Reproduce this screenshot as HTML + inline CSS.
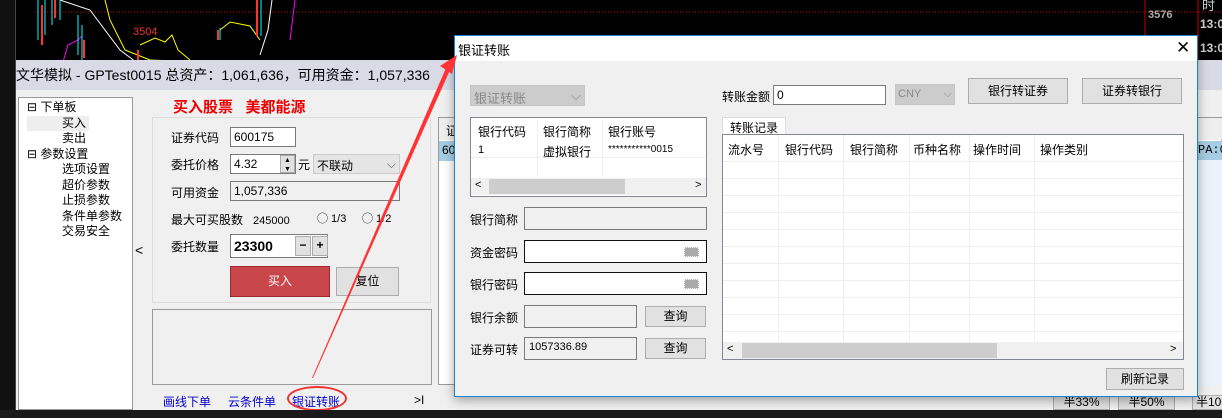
<!DOCTYPE html>
<html><head><meta charset="utf-8"><style>
*{margin:0;padding:0;box-sizing:border-box}
body{width:1222px;height:418px;overflow:hidden;background:#000;position:relative;font-family:"Liberation Sans","Noto Sans CJK SC",sans-serif;font-size:12px;color:#000}
.a{position:absolute;white-space:nowrap}
.inp{position:absolute;background:#fff;border:1px solid #7a7a7a}
.btn{position:absolute;background:#e1e1e1;border:1px solid #adadad;text-align:center}
.gl{position:absolute;background:#f0f0f0}
</style></head><body>
<svg class="a" style="left:0;top:0" width="1222" height="70">
<line x1="35" y1="12" x2="1222" y2="12" stroke="#c00" stroke-dasharray="1,2"/>
<line x1="1145" y1="0" x2="1145" y2="36" stroke="#c00"/>
<line x1="1198" y1="0" x2="1198" y2="60" stroke="#c00"/>
<polyline points="60,0 90,10 120,50 140,65" fill="none" stroke="#fff" stroke-width="1"/>
<polyline points="105,0 110,20 125,50 150,60 200,62" fill="none" stroke="#ff0" stroke-width="1"/>
<polyline points="63,62 68,45 78,40 82,36" fill="none" stroke="#f0f" stroke-width="1"/>
<polyline points="140,45 155,38 165,42 172,35 178,50 190,60" fill="none" stroke="#ff0"/>
<polyline points="220,30 230,22 250,26 260,40" fill="none" stroke="#ff0"/>
<polyline points="272,0 268,30 260,55" fill="none" stroke="#fff"/>
<polyline points="295,0 290,40" fill="none" stroke="#f0f"/>
<g stroke="#0ff"><line x1="38" y1="0" x2="38" y2="40"/><line x1="45" y1="0" x2="45" y2="35"/><line x1="52" y1="0" x2="52" y2="25"/><line x1="60" y1="0" x2="60" y2="20"/><line x1="78" y1="15" x2="78" y2="55"/><line x1="82" y1="25" x2="82" y2="60"/><line x1="220" y1="28" x2="220" y2="40"/><line x1="261" y1="0" x2="261" y2="36"/></g>
<g stroke="#f33" stroke-width="2"><line x1="42" y1="5" x2="42" y2="45"/><line x1="55" y1="0" x2="55" y2="18"/><line x1="84" y1="40" x2="84" y2="58"/><line x1="138" y1="50" x2="138" y2="62"/><line x1="257" y1="0" x2="257" y2="36"/><line x1="218" y1="30" x2="218" y2="40"/></g>
<text x="133" y="35" fill="#e33" font-size="11" font-family="Liberation Sans">3504</text>
<text x="1148" y="18" fill="#aaa" font-size="11" font-weight="bold" font-family="Liberation Sans">3576</text>
<text x="1202" y="10" fill="#ccc" font-size="13" font-family="Noto Sans CJK SC">时</text>
<text x="1200" y="28" fill="#ccc" font-size="12" font-weight="bold" font-family="Liberation Sans">13:0</text>
<text x="1200" y="52" fill="#ccc" font-size="12" font-weight="bold" font-family="Liberation Sans">13:0</text>
</svg>
<div class="a" style="left:0;top:0;width:16px;height:418px;background:#111;border-right:1px solid #444"></div>
<!-- main window -->
<div class="a" style="left:16px;top:60px;width:1206px;height:350px;background:#f0f0f0"></div>
<div class="a" style="left:16px;top:60px;width:1206px;height:30px;background:#d8dae6"></div>
<div class="a" style="left:16px;top:64px;font-size:14px;line-height:22px">文华模拟 - GPTest0015 总资产：1,061,636，可用资金：1,057,336</div>
<div class="a" style="left:18px;top:97px;width:115px;height:313px;background:#fff;border:1px solid #999"></div>
<div class="a" style="left:27px;top:100px;line-height:15.5px;font-size:12px">
<div>⊟ 下单板</div><div style="padding-left:35px;background:#eee;width:62px">买入</div><div style="padding-left:35px">卖出</div><div>⊟ 参数设置</div><div style="padding-left:35px">选项设置</div><div style="padding-left:35px">超价参数</div><div style="padding-left:35px">止损参数</div><div style="padding-left:35px">条件单参数</div><div style="padding-left:35px">交易安全</div></div>
<div class="a" style="left:135px;top:242px;font-size:14px">&lt;</div>
<div class="a" style="left:173px;top:96px;color:#e00;font-weight:bold;font-size:15px">买入股票 &nbsp; 美都能源</div>
<div class="a" style="left:152px;top:117px;width:279px;height:186px;border:1px solid #ddd"></div>
<div class="a" style="left:171px;top:129px">证券代码</div><div class="inp" style="left:230px;top:127px;width:66px;height:20px;padding:2px 3px">600175</div>
<div class="a" style="left:171px;top:156px">委托价格</div><div class="inp" style="left:230px;top:154px;width:66px;height:20px;padding:2px 3px">4.32</div>
<div class="btn" style="left:280px;top:155px;width:15px;height:18px;font-size:7px;line-height:9px">▲<br>▼</div>
<div class="a" style="left:298px;top:156px">元</div>
<div class="a" style="left:313px;top:154px;width:87px;height:20px;background:#e5e5e5;border:1px solid #ccc;padding:2px 3px">不联动<span style="float:right;color:#555">⌵</span></div>
<div class="a" style="left:171px;top:184px">可用资金</div><div class="a" style="left:230px;top:181px;width:170px;height:20px;background:#f0f0f0;border:1px solid #7a7a7a;padding:2px 3px">1,057,336</div>
<div class="a" style="left:171px;top:211px">最大可买股数 &nbsp;&nbsp;<span style="font-size:11px">245000</span></div>
<div class="a" style="left:317px;top:210px;font-size:11px">◯ 1/3</div><div class="a" style="left:362px;top:210px;font-size:11px">◯ 1/2</div>
<div class="a" style="left:171px;top:238px">委托数量</div>
<div class="inp" style="left:230px;top:234px;width:98px;height:24px;padding:3px 3px;font-weight:bold;font-size:14px">23300</div>
<div class="btn" style="left:295px;top:236px;width:16px;height:20px;font-weight:bold;line-height:17px">−</div>
<div class="btn" style="left:312px;top:236px;width:16px;height:20px;font-weight:bold;line-height:17px">+</div>
<div class="a" style="left:230px;top:266px;width:100px;height:31px;background:#c9464a;border:1px solid #9a2a2e;color:#fff;text-align:center;line-height:29px">买入</div>
<div class="btn" style="left:336px;top:267px;width:63px;height:29px;line-height:27px">复位</div>
<div class="a" style="left:152px;top:309px;width:280px;height:76px;border:1px solid #999"></div>
<div class="a" style="left:163px;top:393px;color:#00c">画线下单</div>
<div class="a" style="left:228px;top:393px;color:#00c">云条件单</div>
<div class="a" style="left:292px;top:393px;color:#00c">银证转账</div>
<div class="a" style="left:414px;top:393px">&gt;I</div>
<div class="a" style="left:287px;top:386px;width:60px;height:25px;border:2px solid #e33;border-radius:50%"></div>
<!-- right behind table -->
<div class="a" style="left:438px;top:117px;width:784px;height:268px;background:#fff;border:1px solid #999"></div>
<div class="a" style="left:439px;top:118px;width:783px;height:22px;background:#eee"></div>
<div class="a" style="left:439px;top:141px;width:783px;height:20px;background:#a6cde3"></div>
<div class="a" style="left:446px;top:122px">证</div><div class="a" style="left:442px;top:143px">60</div>
<div class="a" style="left:1198px;top:143px;font-family:'Liberation Mono'">PA:0</div>
<div class="a" style="left:1198px;top:160px;width:24px;height:225px;background:#eaf2fb"></div>
<div class="a" style="left:1196px;top:60px;width:26px;height:30px;background:#d8dae6"></div>
<div class="btn" style="left:1053px;top:395px;width:57px;height:15px;line-height:13px">半33%</div>
<div class="btn" style="left:1118px;top:395px;width:57px;height:15px;line-height:13px">半50%</div>
<div class="btn" style="left:1192px;top:395px;width:40px;height:15px;line-height:13px">半100</div>
<div class="a" style="left:0;top:410px;width:1222px;height:8px;background:#1a1a1a"></div>
<!-- dialog -->
<div class="a" style="left:454px;top:35px;width:744px;height:362px;background:#f0f0f0;border:1px solid #1883d7;box-shadow:0 3px 10px rgba(0,0,0,.35)"></div>
<div class="a" style="left:455px;top:36px;width:742px;height:25px;background:#fff"></div>
<div class="a" style="left:458px;top:40px;font-size:13px">银证转账</div>
<div class="a" style="left:1176px;top:38px;font-size:17px">✕</div>
<div class="a" style="left:470px;top:85px;width:115px;height:21px;background:#ccc;border:1px solid #c4c4c4;color:#888;padding:2px 3px;font-size:13px">银证转账<span style="float:right">⌵</span></div>
<div class="a" style="left:470px;top:117px;width:237px;height:80px;background:#fff;border:1px solid #828790"></div>
<div class="a" style="left:537px;top:120px;width:1px;height:56px;background:#eee"></div><div class="a" style="left:602px;top:120px;width:1px;height:56px;background:#eee"></div>
<div class="a" style="left:471px;top:157px;width:235px;height:1px;background:#eee"></div>
<div class="a" style="left:478px;top:123px">银行代码</div><div class="a" style="left:543px;top:123px">银行简称</div><div class="a" style="left:608px;top:123px">银行账号</div>
<div class="a" style="left:478px;top:144px;font-size:11px">1</div><div class="a" style="left:543px;top:143px">虚拟银行</div><div class="a" style="left:608px;top:144px;font-size:10px">***********0015</div>
<div class="a" style="left:471px;top:178px;width:235px;height:17px;background:#f0f0f0"></div>
<div class="a" style="left:489px;top:179px;width:136px;height:15px;background:#cdcdcd"></div>
<div class="a" style="left:475px;top:179px;font-size:11px">&lt;</div><div class="a" style="left:695px;top:179px;font-size:11px">&gt;</div>
<div class="a" style="left:470px;top:211px">银行简称</div><div class="a" style="left:524px;top:207px;width:183px;height:23px;border:1px solid #7a7a7a"></div>
<div class="a" style="left:470px;top:244px">资金密码</div><div class="a" style="left:524px;top:240px;width:183px;height:23px;background:#fff;border:1px solid #111"></div>
<div class="a" style="left:470px;top:276px">银行密码</div><div class="a" style="left:524px;top:272px;width:183px;height:23px;background:#fff;border:1px solid #111"></div>
<div class="a" style="left:684px;top:247px;width:15px;height:10px;background:#aaa;border:1px dotted #fff"></div>
<div class="a" style="left:684px;top:279px;width:15px;height:10px;background:#aaa;border:1px dotted #fff"></div>
<div class="a" style="left:470px;top:309px">银行余额</div><div class="a" style="left:524px;top:305px;width:113px;height:23px;border:1px solid #7a7a7a"></div>
<div class="btn" style="left:645px;top:306px;width:61px;height:21px;line-height:19px">查询</div>
<div class="a" style="left:470px;top:341px">证券可转</div><div class="a" style="left:524px;top:337px;width:113px;height:23px;border:1px solid #7a7a7a;padding:3px 4px;font-size:11px">1057336.89</div>
<div class="btn" style="left:645px;top:338px;width:61px;height:21px;line-height:19px">查询</div>
<div class="a" style="left:722px;top:88px">转账金额</div>
<div class="inp" style="left:773px;top:85px;width:113px;height:20px;padding:2px 3px">0</div>
<div class="a" style="left:895px;top:84px;width:60px;height:21px;background:#ccc;border:1px solid #c4c4c4;color:#888;padding:3px 2px;font-size:11px">CNY<span style="float:right">⌵</span></div>
<div class="btn" style="left:968px;top:78px;width:100px;height:26px;line-height:24px">银行转证券</div>
<div class="btn" style="left:1082px;top:78px;width:100px;height:26px;line-height:24px">证券转银行</div>
<div class="a" style="left:722px;top:117px;width:64px;height:18px;background:#fff;border:1px solid #ddd;border-bottom:none;padding:1px 7px">转账记录</div>
<div class="a" style="left:722px;top:134px;width:462px;height:226px;background:#fff;border:1px solid #828790"></div>
<svg class="a" style="left:723px;top:135px" width="460" height="207">
<g stroke="#eee"><line x1="55.5" y1="0" x2="55.5" y2="207"/><line x1="120.5" y1="0" x2="120.5" y2="207"/><line x1="186.5" y1="0" x2="186.5" y2="207"/><line x1="246.5" y1="0" x2="246.5" y2="207"/><line x1="311.5" y1="0" x2="311.5" y2="207"/>
<line x1="0" y1="26.5" x2="460" y2="26.5"/><line x1="0" y1="43.5" x2="460" y2="43.5"/><line x1="0" y1="60.5" x2="460" y2="60.5"/><line x1="0" y1="77.5" x2="460" y2="77.5"/><line x1="0" y1="94.5" x2="460" y2="94.5"/><line x1="0" y1="111.5" x2="460" y2="111.5"/><line x1="0" y1="128.5" x2="460" y2="128.5"/><line x1="0" y1="145.5" x2="460" y2="145.5"/><line x1="0" y1="162.5" x2="460" y2="162.5"/><line x1="0" y1="179.5" x2="460" y2="179.5"/><line x1="0" y1="196.5" x2="460" y2="196.5"/></g></svg>
<div class="a" style="left:728px;top:141px">流水号</div><div class="a" style="left:785px;top:141px">银行代码</div><div class="a" style="left:850px;top:141px">银行简称</div><div class="a" style="left:913px;top:141px">币种名称</div><div class="a" style="left:973px;top:141px">操作时间</div><div class="a" style="left:1040px;top:141px">操作类别</div>
<div class="a" style="left:723px;top:342px;width:460px;height:17px;background:#f0f0f0"></div>
<div class="a" style="left:742px;top:343px;width:255px;height:15px;background:#cdcdcd"></div>
<div class="a" style="left:727px;top:343px;font-size:11px">&lt;</div><div class="a" style="left:1170px;top:343px;font-size:11px">&gt;</div>
<div class="btn" style="left:1106px;top:368px;width:78px;height:22px;line-height:20px">刷新记录</div>
<!-- arrow -->
<svg class="a" style="left:0;top:0" width="1222" height="418">
<polygon points="312,378 313,378 450,70 446,68" fill="#f33"/>
<polygon points="457,55 440,66 452,74" fill="#f33"/>
</svg>
</body></html>
